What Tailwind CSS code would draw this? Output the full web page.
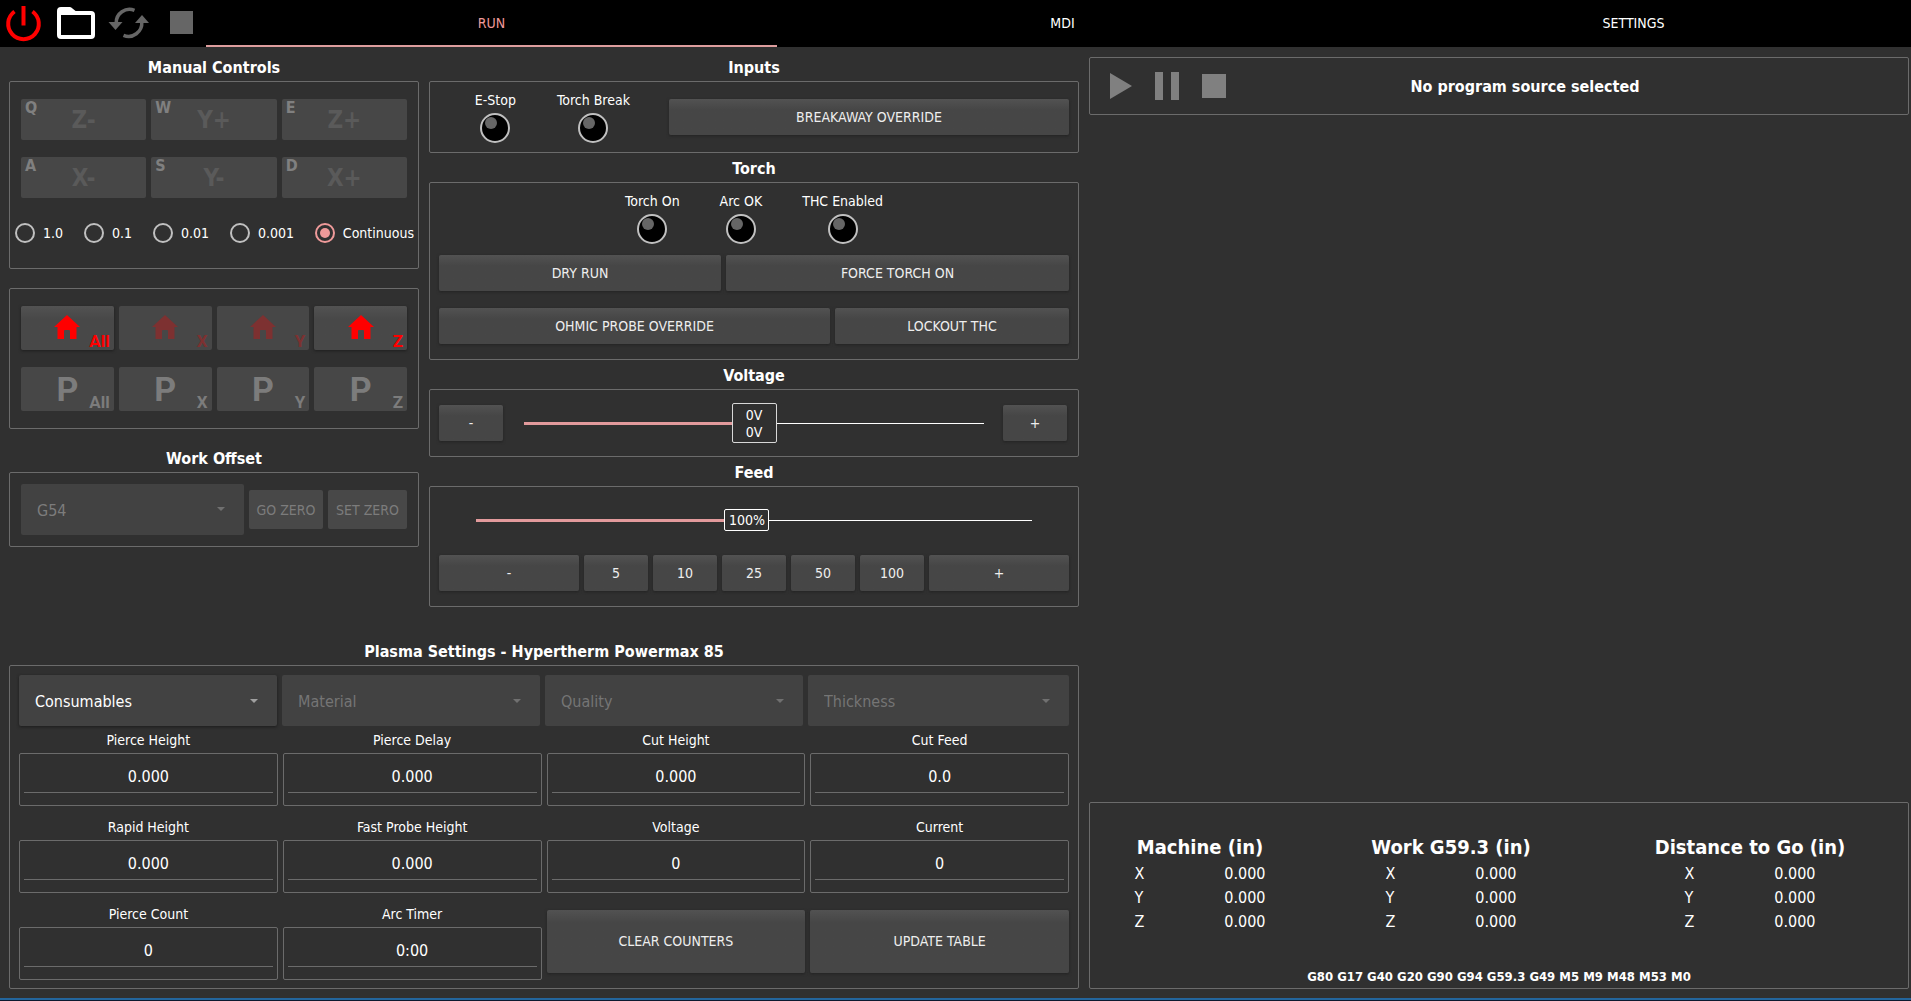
<!DOCTYPE html>
<html lang="en">
<head>
<meta charset="utf-8">
<meta name="viewport" content="width=device-width, initial-scale=1">
<title>Plasma Control</title>
<script src="https://cdn.jsdelivr.net/npm/@tailwindcss/browser@4"></script>
</head>
<body class="flex min-h-screen flex-col bg-[#303030] font-['DejaVu_Sans_Condensed','DejaVu_Sans',sans-serif] text-[14px] leading-[17px] text-white">

<!-- Top bar -->
<header class="flex h-[47px] shrink-0 overflow-hidden bg-black">
  <div class="flex w-[206px] shrink-0 items-center pb-[2px]">
    <button type="button" aria-label="Power" class="ml-[4px] h-[40px] w-[40px]">
      <svg viewBox="0 0 40 40" class="h-[40px] w-[40px]" fill="none" stroke="#f00" stroke-width="4"><path d="M19.500 3v19.500"/><path d="M10.500 8.500a15.300 15.300 0 1 0 18 0" /></svg>
    </button>
    <button type="button" aria-label="Open file" class="ml-[11px] h-[40px] w-[42px]">
      <svg viewBox="0 0 42 40" class="h-[40px] w-[42px]" fill="none" stroke="#fff" stroke-width="4" stroke-linejoin="round"><path d="M4 11V8q0-2 2-2h9l5 4h16q2 0 2 2v20q0 2-2 2H6q-2 0-2-2z"/><path d="M4 9h15l3 2H4z" fill="#fff" stroke-width="2"/></svg>
    </button>
    <button type="button" aria-label="Reload" class="ml-[11px] h-[40px] w-[42px]" disabled>
      <svg viewBox="0 0 42 40" class="h-[40px] w-[42px]" fill="none" stroke="#666" stroke-width="3.500"><path d="M26.500 7.300A13.300 13.300 0 0 0 8.200 20"/><path d="M15.500 32.300A13.300 13.300 0 0 0 33.800 19"/><path d="M.5 19h14l-7 8zM27 20h14l-7-8z" fill="#666" stroke="none"/></svg>
    </button>
    <button type="button" aria-label="Stop" class="ml-[20px] h-[23px] w-[23px] bg-[#666]" disabled></button>
  </div>
  <nav class="-mr-2 flex flex-1">
    <a href="#run" class="flex flex-1 items-center justify-center border-b-2 border-[#dd9d9d] pt-[2px] text-[#ef9a9a]">RUN</a>
    <a href="#mdi" class="flex flex-1 items-center justify-center">MDI</a>
    <a href="#settings" class="flex flex-1 items-center justify-center">SETTINGS</a>
  </nav>
</header>

<main class="grid flex-1 grid-cols-[1070fr_820fr] gap-[10px] pb-[9px] pl-[9px] pr-[2px]">

  <div class="flex flex-col justify-between">
    <div class="grid grid-cols-[410fr_650fr] gap-[10px] pt-[5px]">

      <!-- Jog, homing and offsets -->
      <div>
        <h2 class="flex h-[29px] items-center justify-center pt-[2px] text-[16px] font-bold">Manual Controls</h2>
        <section class="h-[188px] rounded-[2px] border border-[#6b6b6b] pt-[17px]">
          <div class="grid grid-cols-3 gap-x-[5px] gap-y-[17px] px-[11px] font-bold">
            <button type="button" disabled class="relative h-[41px] rounded-[2px] bg-[#474747] pt-[2px] text-[24px] text-[#5a5a5a]"><span class="absolute left-[4px] top-0 text-[16px] leading-[18px] text-[#808080]">Q</span>Z-</button>
            <button type="button" disabled class="relative h-[41px] rounded-[2px] bg-[#474747] pt-[2px] text-[24px] text-[#5a5a5a]"><span class="absolute left-[4px] top-0 text-[16px] leading-[18px] text-[#808080]">W</span>Y+</button>
            <button type="button" disabled class="relative h-[41px] rounded-[2px] bg-[#474747] pt-[2px] text-[24px] text-[#5a5a5a]"><span class="absolute left-[4px] top-0 text-[16px] leading-[18px] text-[#808080]">E</span>Z+</button>
            <button type="button" disabled class="relative h-[41px] rounded-[2px] bg-[#474747] pt-[2px] text-[24px] text-[#5a5a5a]"><span class="absolute left-[4px] top-0 text-[16px] leading-[18px] text-[#808080]">A</span>X-</button>
            <button type="button" disabled class="relative h-[41px] rounded-[2px] bg-[#474747] pt-[2px] text-[24px] text-[#5a5a5a]"><span class="absolute left-[4px] top-0 text-[16px] leading-[18px] text-[#808080]">S</span>Y-</button>
            <button type="button" disabled class="relative h-[41px] rounded-[2px] bg-[#474747] pt-[2px] text-[24px] text-[#5a5a5a]"><span class="absolute left-[4px] top-0 text-[16px] leading-[18px] text-[#808080]">D</span>X+</button>
          </div>
          <div class="mt-[25px] flex justify-between pl-[5px] pr-[4px]">
            <label class="flex items-center gap-[8px]"><input type="radio" name="jog" class="h-[20px] w-[20px] appearance-none rounded-full border-2 border-[#c0c0c0] checked:border-[#ef9a9a] checked:bg-[#ef9a9a] checked:bg-clip-content checked:p-[3px]">1.0</label>
            <label class="flex items-center gap-[8px]"><input type="radio" name="jog" class="h-[20px] w-[20px] appearance-none rounded-full border-2 border-[#c0c0c0] checked:border-[#ef9a9a] checked:bg-[#ef9a9a] checked:bg-clip-content checked:p-[3px]">0.1</label>
            <label class="flex items-center gap-[8px]"><input type="radio" name="jog" class="h-[20px] w-[20px] appearance-none rounded-full border-2 border-[#c0c0c0] checked:border-[#ef9a9a] checked:bg-[#ef9a9a] checked:bg-clip-content checked:p-[3px]">0.01</label>
            <label class="flex items-center gap-[8px]"><input type="radio" name="jog" class="h-[20px] w-[20px] appearance-none rounded-full border-2 border-[#c0c0c0] checked:border-[#ef9a9a] checked:bg-[#ef9a9a] checked:bg-clip-content checked:p-[3px]">0.001</label>
            <label class="flex items-center gap-[8px]"><input type="radio" name="jog" checked class="h-[20px] w-[20px] appearance-none rounded-full border-2 border-[#c0c0c0] checked:border-[#ef9a9a] checked:bg-[#ef9a9a] checked:bg-clip-content checked:p-[3px]">Continuous</label>
          </div>
        </section>

        <section class="mt-[19px] grid h-[141px] grid-cols-4 content-start gap-x-[5px] gap-y-[17px] rounded-[2px] border border-[#6b6b6b] px-[11px] pt-[17px] font-['Roboto',sans-serif] text-[17px] font-bold">
          <button type="button" aria-label="Home All" class="relative flex h-[44px] items-center justify-center rounded-[2px] bg-linear-to-b from-[#525252] to-[#484848] to-30% pb-[2px] text-[#f00] shadow-[0_1px_3px_#1e1e1e]">
            <svg viewBox="0 0 26 24" class="h-[24px] w-[26px]" fill="currentColor"><path d="M13 0l13 12h-3.500v12H16v-8q0-1-1-1h-4q-1 0-1 1v8H3.500V12H0z"/></svg>
            <span class="absolute bottom-0 right-[4px] leading-[18px]">All</span></button>
          <button type="button" aria-label="Home X" disabled class="relative flex h-[44px] items-center justify-center rounded-[2px] bg-[#474747] pb-[2px] text-[#7d3131]">
            <svg viewBox="0 0 26 24" class="h-[24px] w-[26px]" fill="currentColor"><path d="M13 0l13 12h-3.500v12H16v-8q0-1-1-1h-4q-1 0-1 1v8H3.500V12H0z"/></svg>
            <span class="absolute bottom-0 right-[4px] leading-[18px]">X</span></button>
          <button type="button" aria-label="Home Y" disabled class="relative flex h-[44px] items-center justify-center rounded-[2px] bg-[#474747] pb-[2px] text-[#7d3131]">
            <svg viewBox="0 0 26 24" class="h-[24px] w-[26px]" fill="currentColor"><path d="M13 0l13 12h-3.500v12H16v-8q0-1-1-1h-4q-1 0-1 1v8H3.500V12H0z"/></svg>
            <span class="absolute bottom-0 right-[4px] leading-[18px]">Y</span></button>
          <button type="button" aria-label="Home Z" class="relative flex h-[44px] items-center justify-center rounded-[2px] bg-linear-to-b from-[#525252] to-[#484848] to-30% pb-[2px] text-[#f00] shadow-[0_1px_3px_#1e1e1e]">
            <svg viewBox="0 0 26 24" class="h-[24px] w-[26px]" fill="currentColor"><path d="M13 0l13 12h-3.500v12H16v-8q0-1-1-1h-4q-1 0-1 1v8H3.500V12H0z"/></svg>
            <span class="absolute bottom-0 right-[4px] leading-[18px]">Z</span></button>
          <button type="button" disabled class="relative h-[44px] rounded-[2px] bg-[#474747] text-[34px] text-[#7c7c7c]">P<span class="absolute bottom-0 right-[4px] text-[17px] leading-[18px]">All</span></button>
          <button type="button" disabled class="relative h-[44px] rounded-[2px] bg-[#474747] text-[34px] text-[#7c7c7c]">P<span class="absolute bottom-0 right-[4px] text-[17px] leading-[18px]">X</span></button>
          <button type="button" disabled class="relative h-[44px] rounded-[2px] bg-[#474747] text-[34px] text-[#7c7c7c]">P<span class="absolute bottom-0 right-[4px] text-[17px] leading-[18px]">Y</span></button>
          <button type="button" disabled class="relative h-[44px] rounded-[2px] bg-[#474747] text-[34px] text-[#7c7c7c]">P<span class="absolute bottom-0 right-[4px] text-[17px] leading-[18px]">Z</span></button>
        </section>

        <h2 class="mt-[14px] flex h-[29px] items-center justify-center pt-[2px] text-[16px] font-bold">Work Offset</h2>
        <section class="flex h-[75px] items-center gap-[5px] rounded-[2px] border border-[#6b6b6b] px-[11px]">
          <div class="relative flex-1">
            <select disabled aria-label="Work offset" class="h-[51px] w-full appearance-none rounded-[2px] bg-[#424242] pl-[16px] pt-[2px] text-[16px] text-[#7c7c7c] opacity-100"><option>G54</option></select>
            <svg viewBox="0 0 8 4" class="pointer-events-none absolute right-[19px] top-[23px] h-[4px] w-[8px]" fill="#707070"><path d="M0 0h8L4 4z"/></svg>
          </div>
          <button type="button" disabled class="h-[39px] w-[74px] rounded-[2px] bg-[#484848] pt-[2px] text-[#7c7c7c]">GO ZERO</button>
          <button type="button" disabled class="h-[39px] w-[79px] rounded-[2px] bg-[#484848] pt-[2px] text-[#7c7c7c]">SET ZERO</button>
        </section>
      </div>

      <!-- Inputs, torch and overrides -->
      <div>
        <h2 class="flex h-[29px] items-center justify-center pt-[2px] text-[16px] font-bold">Inputs</h2>
        <section class="flex h-[72px] gap-[39px] rounded-[2px] border border-[#6b6b6b] px-[9px] pt-[10px]">
          <div class="flex flex-1 justify-end gap-[41px]">
            <div class="flex flex-col items-center gap-[4px]"><span>E-Stop</span>
              <svg viewBox="0 0 30 30" class="h-[30px] w-[30px]"><circle cx="15" cy="15" r="14" fill="#000" stroke="#c0c0c0" stroke-width="2"/><circle cx="11" cy="10" r="6" fill="#666"/></svg></div>
            <div class="flex flex-col items-center gap-[4px]"><span>Torch Break</span>
              <svg viewBox="0 0 30 30" class="h-[30px] w-[30px]"><circle cx="15" cy="15" r="14" fill="#000" stroke="#c0c0c0" stroke-width="2"/><circle cx="11" cy="10" r="6" fill="#666"/></svg></div>
          </div>
          <button type="button" class="mt-[7px] h-[36px] w-[400px] rounded-[2px] bg-linear-to-b from-[#525252] to-[#464646] to-30% text-[#eee] shadow-[0_1px_3px_#222]">BREAKAWAY OVERRIDE</button>
        </section>

        <h2 class="flex h-[29px] items-center justify-center pt-[2px] text-[16px] font-bold">Torch</h2>
        <section class="h-[178px] rounded-[2px] border border-[#6b6b6b] px-[9px] pt-[10px]">
          <div class="flex justify-center gap-[40px]">
            <div class="flex flex-col items-center gap-[4px]"><span>Torch On</span>
              <svg viewBox="0 0 30 30" class="h-[30px] w-[30px]"><circle cx="15" cy="15" r="14" fill="#000" stroke="#c0c0c0" stroke-width="2"/><circle cx="11" cy="10" r="6" fill="#666"/></svg></div>
            <div class="flex flex-col items-center gap-[4px]"><span>Arc OK</span>
              <svg viewBox="0 0 30 30" class="h-[30px] w-[30px]"><circle cx="15" cy="15" r="14" fill="#000" stroke="#c0c0c0" stroke-width="2"/><circle cx="11" cy="10" r="6" fill="#666"/></svg></div>
            <div class="flex flex-col items-center gap-[4px]"><span>THC Enabled</span>
              <svg viewBox="0 0 30 30" class="h-[30px] w-[30px]"><circle cx="15" cy="15" r="14" fill="#000" stroke="#c0c0c0" stroke-width="2"/><circle cx="11" cy="10" r="6" fill="#666"/></svg></div>
          </div>
          <div class="mt-[11px] grid grid-cols-[282fr_343fr] gap-[5px]">
            <button type="button" class="h-[36px] rounded-[2px] bg-linear-to-b from-[#525252] to-[#464646] to-30% text-[#eee] shadow-[0_1px_3px_#222]">DRY RUN</button>
            <button type="button" class="h-[36px] rounded-[2px] bg-linear-to-b from-[#525252] to-[#464646] to-30% text-[#eee] shadow-[0_1px_3px_#222]">FORCE TORCH ON</button>
          </div>
          <div class="mt-[17px] grid grid-cols-[391fr_234fr] gap-[5px]">
            <button type="button" class="h-[36px] rounded-[2px] bg-linear-to-b from-[#525252] to-[#464646] to-30% text-[#eee] shadow-[0_1px_3px_#222]">OHMIC PROBE OVERRIDE</button>
            <button type="button" class="h-[36px] rounded-[2px] bg-linear-to-b from-[#525252] to-[#464646] to-30% text-[#eee] shadow-[0_1px_3px_#222]">LOCKOUT THC</button>
          </div>
        </section>

        <h2 class="flex h-[29px] items-center justify-center pt-[2px] text-[16px] font-bold">Voltage</h2>
        <section class="flex h-[68px] items-center rounded-[2px] border border-[#6b6b6b] pl-[9px] pr-[11px]">
          <button type="button" class="h-[36px] w-[64px] rounded-[2px] bg-linear-to-b from-[#525252] to-[#464646] to-30% text-[#eee] shadow-[0_1px_3px_#222]">-</button>
          <div class="relative ml-[21px] mr-[19px] flex flex-1 items-center">
            <div class="h-[3px] flex-1 bg-[#e29a9c]"></div>
            <output class="flex h-[40px] w-[45px] flex-col items-center justify-center rounded-[2px] border border-[#d8d8d8] bg-[#303030] pt-[2px]"><span>0V</span><span>0V</span></output>
            <div class="h-px flex-1 bg-white"></div>
            <input type="range" aria-label="Voltage override" value="50" class="absolute inset-0 h-full w-full opacity-0">
          </div>
          <button type="button" class="h-[36px] w-[64px] rounded-[2px] bg-linear-to-b from-[#525252] to-[#464646] to-30% text-[#eee] shadow-[0_1px_3px_#222]">+</button>
        </section>

        <h2 class="flex h-[29px] items-center justify-center pt-[2px] text-[16px] font-bold">Feed</h2>
        <section class="h-[121px] rounded-[2px] border border-[#6b6b6b] px-[9px] pt-[22px]">
          <div class="relative mx-[37px] flex items-center">
            <div class="h-[3px] flex-[248] bg-[#e29a9c]"></div>
            <output class="flex h-[22px] w-[45px] items-center justify-center rounded-[2px] border border-white bg-[#303030]">100%</output>
            <div class="h-px flex-[262] bg-white"></div>
            <input type="range" aria-label="Feed override" max="200" value="100" class="absolute inset-0 h-full w-full opacity-0">
          </div>
          <div class="mt-[24px] grid grid-cols-[1fr_64px_64px_64px_64px_64px_1fr] gap-[5px]">
            <button type="button" class="h-[36px] rounded-[2px] bg-linear-to-b from-[#525252] to-[#464646] to-30% text-[#eee] shadow-[0_1px_3px_#222]">-</button>
            <button type="button" class="h-[36px] rounded-[2px] bg-linear-to-b from-[#525252] to-[#464646] to-30% text-[#eee] shadow-[0_1px_3px_#222]">5</button>
            <button type="button" class="h-[36px] rounded-[2px] bg-linear-to-b from-[#525252] to-[#464646] to-30% text-[#eee] shadow-[0_1px_3px_#222]">10</button>
            <button type="button" class="h-[36px] rounded-[2px] bg-linear-to-b from-[#525252] to-[#464646] to-30% text-[#eee] shadow-[0_1px_3px_#222]">25</button>
            <button type="button" class="h-[36px] rounded-[2px] bg-linear-to-b from-[#525252] to-[#464646] to-30% text-[#eee] shadow-[0_1px_3px_#222]">50</button>
            <button type="button" class="h-[36px] rounded-[2px] bg-linear-to-b from-[#525252] to-[#464646] to-30% text-[#eee] shadow-[0_1px_3px_#222]">100</button>
            <button type="button" class="h-[36px] rounded-[2px] bg-linear-to-b from-[#525252] to-[#464646] to-30% text-[#eee] shadow-[0_1px_3px_#222]">+</button>
          </div>
        </section>
      </div>
    </div>

    <!-- Cut chart -->
    <div>
      <h2 class="flex h-[29px] items-center justify-center pt-[2px] text-[16px] font-bold">Plasma Settings - Hypertherm Powermax 85</h2>
      <section class="h-[324px] rounded-[2px] border border-[#6b6b6b] px-[9px] pt-[9px]">
        <div class="grid grid-cols-[258fr_258fr_258fr_261fr] gap-[5px]">
          <div class="relative">
            <select aria-label="Consumables" class="h-[51px] w-full appearance-none rounded-[2px] bg-[#424242] pl-[16px] pt-[2px] text-[16px] text-white shadow-[0_1px_3px_#1c1c1c]"><option>Consumables</option></select>
            <svg viewBox="0 0 8 4" class="pointer-events-none absolute right-[19px] top-[24px] h-[4px] w-[8px]" fill="#a0a0a0"><path d="M0 0h8L4 4z"/></svg>
          </div>
          <div class="relative">
            <select disabled aria-label="Material" class="h-[51px] w-full appearance-none rounded-[2px] bg-[#424242] pl-[16px] pt-[2px] text-[16px] text-[#757575] opacity-100"><option>Material</option></select>
            <svg viewBox="0 0 8 4" class="pointer-events-none absolute right-[19px] top-[24px] h-[4px] w-[8px]" fill="#707070"><path d="M0 0h8L4 4z"/></svg>
          </div>
          <div class="relative">
            <select disabled aria-label="Quality" class="h-[51px] w-full appearance-none rounded-[2px] bg-[#424242] pl-[16px] pt-[2px] text-[16px] text-[#757575] opacity-100"><option>Quality</option></select>
            <svg viewBox="0 0 8 4" class="pointer-events-none absolute right-[19px] top-[24px] h-[4px] w-[8px]" fill="#707070"><path d="M0 0h8L4 4z"/></svg>
          </div>
          <div class="relative">
            <select disabled aria-label="Thickness" class="h-[51px] w-full appearance-none rounded-[2px] bg-[#424242] pl-[16px] pt-[2px] text-[16px] text-[#757575] opacity-100"><option>Thickness</option></select>
            <svg viewBox="0 0 8 4" class="pointer-events-none absolute right-[19px] top-[24px] h-[4px] w-[8px]" fill="#707070"><path d="M0 0h8L4 4z"/></svg>
          </div>
        </div>
        <div class="mt-[1px] grid grid-cols-4 gap-x-[5px] gap-y-[8px]">
          <label class="text-center"><span class="flex h-[26px] items-center justify-center">Pierce Height</span>
            <span class="block h-[53px] rounded-[2px] border border-[#6b6b6b] p-[4px]"><input value="0.000" class="block h-[35px] w-full border-b border-[#6b6b6b] pt-[2px] text-center text-[16px]"></span></label>
          <label class="text-center"><span class="flex h-[26px] items-center justify-center">Pierce Delay</span>
            <span class="block h-[53px] rounded-[2px] border border-[#6b6b6b] p-[4px]"><input value="0.000" class="block h-[35px] w-full border-b border-[#6b6b6b] pt-[2px] text-center text-[16px]"></span></label>
          <label class="text-center"><span class="flex h-[26px] items-center justify-center">Cut Height</span>
            <span class="block h-[53px] rounded-[2px] border border-[#6b6b6b] p-[4px]"><input value="0.000" class="block h-[35px] w-full border-b border-[#6b6b6b] pt-[2px] text-center text-[16px]"></span></label>
          <label class="text-center"><span class="flex h-[26px] items-center justify-center">Cut Feed</span>
            <span class="block h-[53px] rounded-[2px] border border-[#6b6b6b] p-[4px]"><input value="0.0" class="block h-[35px] w-full border-b border-[#6b6b6b] pt-[2px] text-center text-[16px]"></span></label>
          <label class="text-center"><span class="flex h-[26px] items-center justify-center">Rapid Height</span>
            <span class="block h-[53px] rounded-[2px] border border-[#6b6b6b] p-[4px]"><input value="0.000" class="block h-[35px] w-full border-b border-[#6b6b6b] pt-[2px] text-center text-[16px]"></span></label>
          <label class="text-center"><span class="flex h-[26px] items-center justify-center">Fast Probe Height</span>
            <span class="block h-[53px] rounded-[2px] border border-[#6b6b6b] p-[4px]"><input value="0.000" class="block h-[35px] w-full border-b border-[#6b6b6b] pt-[2px] text-center text-[16px]"></span></label>
          <label class="text-center"><span class="flex h-[26px] items-center justify-center">Voltage</span>
            <span class="block h-[53px] rounded-[2px] border border-[#6b6b6b] p-[4px]"><input value="0" class="block h-[35px] w-full border-b border-[#6b6b6b] pt-[2px] text-center text-[16px]"></span></label>
          <label class="text-center"><span class="flex h-[26px] items-center justify-center">Current</span>
            <span class="block h-[53px] rounded-[2px] border border-[#6b6b6b] p-[4px]"><input value="0" class="block h-[35px] w-full border-b border-[#6b6b6b] pt-[2px] text-center text-[16px]"></span></label>
          <label class="text-center"><span class="flex h-[26px] items-center justify-center">Pierce Count</span>
            <span class="block h-[53px] rounded-[2px] border border-[#6b6b6b] p-[4px]"><input value="0" class="block h-[35px] w-full border-b border-[#6b6b6b] pt-[2px] text-center text-[16px]"></span></label>
          <label class="text-center"><span class="flex h-[26px] items-center justify-center">Arc Timer</span>
            <span class="block h-[53px] rounded-[2px] border border-[#6b6b6b] p-[4px]"><input value="0:00" class="block h-[35px] w-full border-b border-[#6b6b6b] pt-[2px] text-center text-[16px]"></span></label>
          <button type="button" class="mt-[9px] h-[63px] rounded-[2px] bg-linear-to-b from-[#525252] to-[#464646] to-20% text-[#eee] shadow-[0_1px_3px_#222]">CLEAR COUNTERS</button>
          <button type="button" class="mt-[9px] h-[63px] rounded-[2px] bg-linear-to-b from-[#525252] to-[#464646] to-20% text-[#eee] shadow-[0_1px_3px_#222]">UPDATE TABLE</button>
        </div>
      </section>
    </div>
  </div>

  <!-- Program and position readout -->
  <div class="flex flex-col justify-between pt-[10px]">
    <section class="flex h-[58px] items-center rounded-[2px] border border-[#6b6b6b] pl-[20px]">
      <button type="button" aria-label="Run program" disabled><svg viewBox="0 0 22 28" class="h-[28px] w-[22px]" fill="#808080"><path d="M0 1l22 13L0 27z"/></svg></button>
      <button type="button" aria-label="Pause program" disabled class="ml-[23px]"><svg viewBox="0 0 24 28" class="h-[28px] w-[24px]" fill="#808080"><path d="M0 0h8v28H0zM16 0h8v28h-8z"/></svg></button>
      <button type="button" aria-label="Stop program" disabled class="ml-[23px] h-[24px] w-[24px] bg-[#808080]"></button>
      <h1 class="flex-1 pr-[84px] pt-px text-center text-[16px] font-bold">No program source selected</h1>
    </section>

    <section class="flex h-[187px] flex-col justify-between rounded-[2px] border border-[#6b6b6b] pb-[4px] pt-[32px]">
      <div class="grid grid-cols-[220fr_282fr_316fr] text-[16px]">
        <div class="flex flex-col items-center">
          <h2 id="machine" class="h-[26px] whitespace-nowrap text-[20px] font-bold leading-[24px]">Machine (in)</h2>
          <table aria-labelledby="machine">
            <tbody>
              <tr class="h-[24px]"><th scope="row" class="w-[66px] text-left font-normal">X</th><td class="w-[65px] text-right">0.000</td></tr>
              <tr class="h-[24px]"><th scope="row" class="text-left font-normal">Y</th><td class="text-right">0.000</td></tr>
              <tr class="h-[24px]"><th scope="row" class="text-left font-normal">Z</th><td class="text-right">0.000</td></tr>
            </tbody>
          </table>
        </div>
        <div class="flex flex-col items-center">
          <h2 id="work" class="h-[26px] whitespace-nowrap text-[20px] font-bold leading-[24px]">Work G59.3 (in)</h2>
          <table aria-labelledby="work">
            <tbody>
              <tr class="h-[24px]"><th scope="row" class="w-[66px] text-left font-normal">X</th><td class="w-[65px] text-right">0.000</td></tr>
              <tr class="h-[24px]"><th scope="row" class="text-left font-normal">Y</th><td class="text-right">0.000</td></tr>
              <tr class="h-[24px]"><th scope="row" class="text-left font-normal">Z</th><td class="text-right">0.000</td></tr>
            </tbody>
          </table>
        </div>
        <div class="flex flex-col items-center">
          <h2 id="dtg" class="h-[26px] whitespace-nowrap text-[20px] font-bold leading-[24px]">Distance to Go (in)</h2>
          <table aria-labelledby="dtg">
            <tbody>
              <tr class="h-[24px]"><th scope="row" class="w-[66px] text-left font-normal">X</th><td class="w-[65px] text-right">0.000</td></tr>
              <tr class="h-[24px]"><th scope="row" class="text-left font-normal">Y</th><td class="text-right">0.000</td></tr>
              <tr class="h-[24px]"><th scope="row" class="text-left font-normal">Z</th><td class="text-right">0.000</td></tr>
            </tbody>
          </table>
        </div>
      </div>
      <p class="text-center text-[13px] font-bold leading-[15px]">G80 G17 G40 G20 G90 G94 G59.3 G49 M5 M9 M48 M53 M0</p>
    </section>
  </div>
</main>
<footer class="h-[3px] shrink-0 border-t-2 border-[#23659c] bg-[#0c1a30]"></footer>
</body>
</html>
